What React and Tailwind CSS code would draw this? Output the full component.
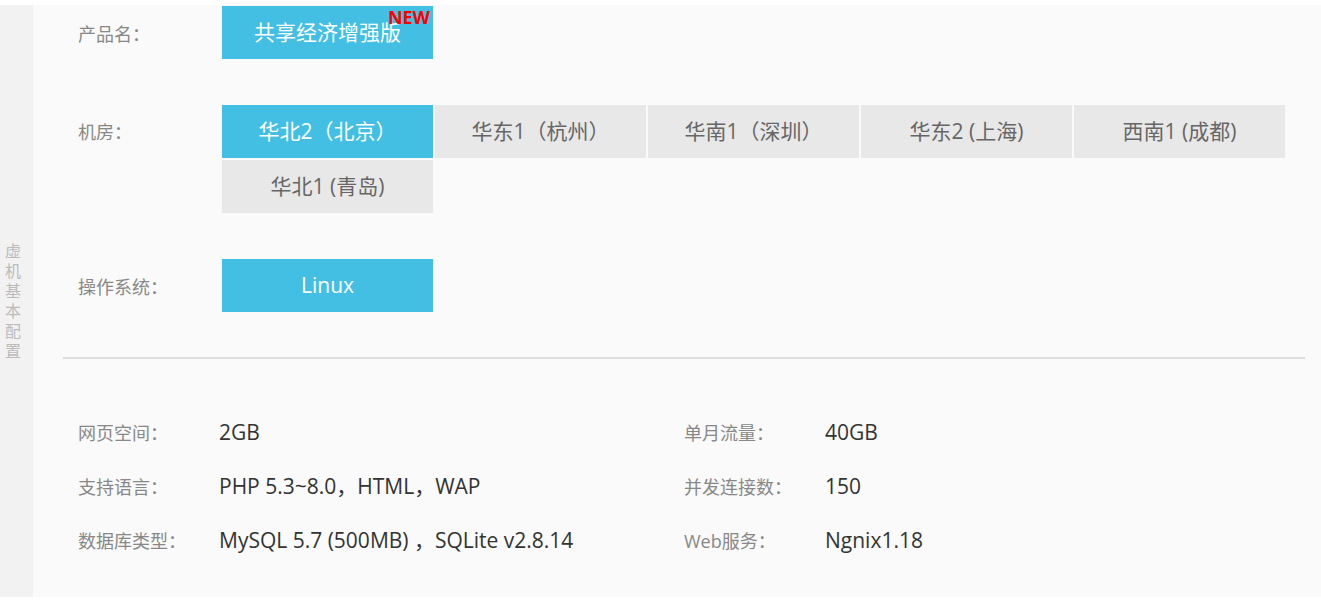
import React, { useState } from 'react';

const rooms = ['华北2（北京）', '华东1（杭州）', '华南1（深圳）', '华东2 (上海)', '西南1 (成都)', '华北1 (青岛)'];

const specs = [
  ['网页空间：', '2GB', '单月流量：', '40GB'],
  ['支持语言：', 'PHP 5.3~8.0，HTML，WAP', '并发连接数：', '150'],
  ['数据库类型：', 'MySQL 5.7 (500MB) ，SQLite v2.8.14', 'Web服务：', 'Ngnix1.18'],
];

const Option = ({ active, children, onClick }) => (
  <button
    onClick={onClick}
    className={`w-[211px] h-[53px] flex items-center justify-center text-[21px] ${
      active ? 'bg-[#42bfe3] text-white' : 'bg-[#e8e8e8] text-[#666]'
    }`}
  >
    {children}
  </button>
);

const App = () => {
  const [room, setRoom] = useState(0);

  return (
    <div
      className="h-[603px] bg-white pt-[5px] pb-[6px] flex"
      style={{ fontFamily: '"Open Sans", "Noto Sans CJK SC", sans-serif' }}
    >
      {/* side label */}
      <div className="w-[33px] bg-[#f2f2f2] flex items-center pl-[4px]">
        <div className="w-[18px] text-[16px] leading-[20px] text-[#bbb] text-center">
          {'虚机基本配置'.split('').map((c) => (
            <div key={c}>{c}</div>
          ))}
        </div>
      </div>

      <div className="flex-1 bg-[#fafafa]">
        <div className="pl-[45px] pt-[1px]">
          {/* product */}
          <div className="flex items-center">
            <span className="w-[144px] pt-[3px] text-[18px] text-[#888]">产品名：</span>
            <div className="relative">
              <Option active>共享经济增强版</Option>
              <span className="absolute right-[3px] top-[0px] text-[18px] leading-[22px] font-bold text-[#f00]">NEW</span>
            </div>
          </div>

          {/* rooms */}
          <div className="flex mt-[46px]">
            <span className="w-[144px] h-[53px] pt-[2px] flex items-center text-[18px] text-[#888]">机房：</span>
            <div className="w-[1065px] flex flex-wrap gap-[2px]">
              {rooms.map((r, i) => (
                <Option key={r} active={room === i} onClick={() => setRoom(i)}>
                  {r}
                </Option>
              ))}
            </div>
          </div>

          {/* os */}
          <div className="flex items-center mt-[46px]">
            <span className="w-[144px] pt-[3px] text-[18px] text-[#888]">操作系统：</span>
            <Option active>Linux</Option>
          </div>
        </div>

        <div className="ml-[30px] mr-[16px] mt-[45px] h-[2px] bg-[#dddddd]"></div>

        {/* specs */}
        <div className="pl-[45px] mt-[47px]">
          {specs.map(([l1, v1, l2, v2]) => (
            <div key={l1} className="h-[54px] flex items-center">
              <div className="w-[606px] flex items-center">
                <span className="w-[141px] text-[18px] text-[#888]">{l1}</span>
                <span className="text-[21px] text-[#333]">{v1}</span>
              </div>
              <span className="w-[141px] text-[18px] text-[#888]">{l2}</span>
              <span className="text-[21px] text-[#333]">{v2}</span>
            </div>
          ))}
        </div>
      </div>
    </div>
  );
};

export default App;
